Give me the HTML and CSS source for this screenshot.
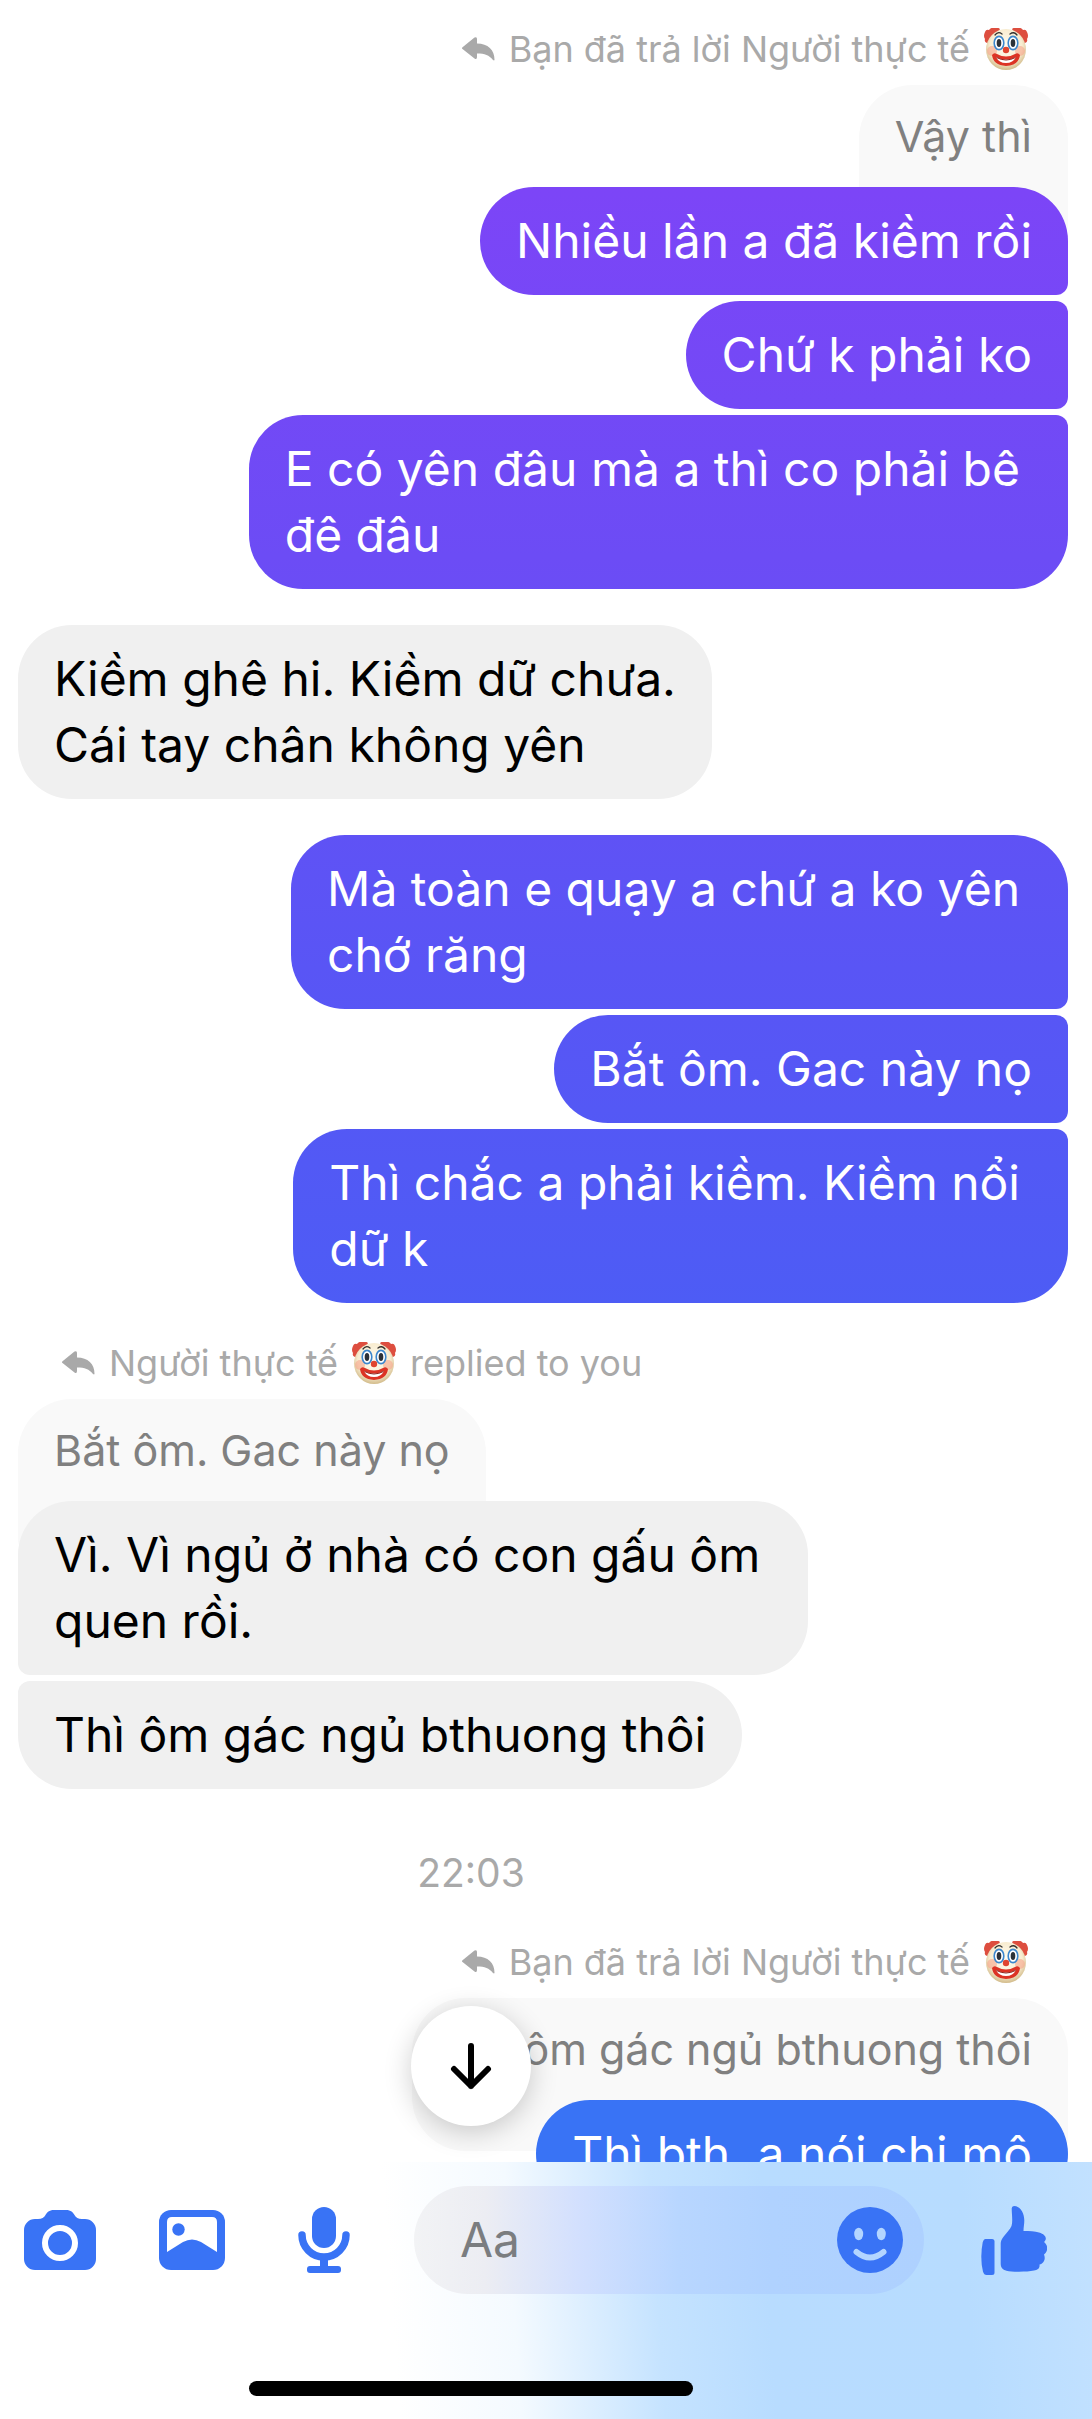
FILE: index.html
```html
<!DOCTYPE html>
<html lang="vi">
<head>
<meta charset="utf-8">
<meta name="viewport" content="width=device-width, initial-scale=1">
<title>Người thực tế</title>
<link rel="stylesheet" href="styles.css">
</head>
<body>
<svg class="sprite" aria-hidden="true">
  <defs>
    <radialGradient id="face" cx="50%" cy="42%" r="58%">
      <stop offset="0" stop-color="#fffdf2"/>
      <stop offset="0.7" stop-color="#f8ecd0"/>
      <stop offset="1" stop-color="#d2bb8a"/>
    </radialGradient>
    <symbol id="clown" viewBox="0 0 44 42">
      <path d="M1 4q1-3 4-2 2-3 6-2 3-1 5 1L7 17q-3 1-4-2-3-1-2-4-2-3 0-7zM43 4q-1-3-4-2-2-3-6-2-3-1-5 1l9 16q3 1 4-2 3-1 2-4 2-3 0-7z" fill="#dd4e3f"/>
      <ellipse cx="22" cy="21.500" rx="20" ry="20.500" fill="url(#face)"/>
      <circle cx="8" cy="23" r="5" fill="#f7a58c" opacity=".6"/>
      <circle cx="36" cy="23" r="5" fill="#f7a58c" opacity=".6"/>
      <path d="M11 7q3-4 7-1M26 6q4-3 7 1" fill="none" stroke="#33302e" stroke-width="1.300" stroke-linecap="round"/>
      <ellipse cx="15" cy="15" rx="4.800" ry="6.600" fill="#fff" stroke="#3b86cc" stroke-width="1.600"/>
      <ellipse cx="29" cy="15" rx="4.800" ry="6.600" fill="#fff" stroke="#3b86cc" stroke-width="1.600"/>
      <ellipse cx="15" cy="15" rx="2.300" ry="4" fill="#2b3138"/>
      <ellipse cx="29" cy="15" rx="2.300" ry="4" fill="#2b3138"/>
      <circle cx="22" cy="22" r="3.200" fill="#e0442f"/>
      <path d="M8 27q2-3 5-1 9 5 18 0 3-2 5 1-1 10-14 11Q9 37 8 27z" fill="#dc3325"/>
      <path d="M12 29q10 5 20 0-3 6-10 6t-10-6z" fill="#fff"/>
      <path d="M12.500 29.500q9.500 5 19 0" fill="none" stroke="#8d1f18" stroke-width="1"/>
    </symbol>
    <symbol id="reply" viewBox="0 0 33 24">
      <path d="M.5 10.300 12.500.6Q15-.8 15 2v4.500C26 6.500 32.500 13 32.500 22.500q0 1.500-1.500.5C27 18 23 16.500 15 16.500V20q0 3-2.500 1.400L.5 12q-1-.8 0-1.700z" fill="currentColor"/>
    </symbol>
  </defs>
</svg>

<main class="chat">
  <section class="group sent">
    <p class="label"><svg class="reply-icon"><use href="#reply"/></svg><span>Bạn đã trả lời Người thực tế</span><svg class="emoji" role="img" aria-label="clown"><use href="#clown"/></svg></p>
    <blockquote class="quote">Vậy thì</blockquote>
    <p class="bubble first">Nhiều lần a đã kiềm rồi</p>
    <p class="bubble">Chứ k phải ko</p>
    <p class="bubble last long">E có yên đâu mà a thì co phải bê<br>đê đâu</p>
  </section>

  <section class="group received">
    <p class="bubble first last">Kiềm ghê hi. Kiềm dữ chưa.<br>Cái tay chân không yên</p>
  </section>

  <section class="group sent">
    <p class="bubble first long">Mà toàn e quạy a chứ a ko yên<br>chớ răng</p>
    <p class="bubble">Bắt ôm. Gac này nọ</p>
    <p class="bubble last long">Thì chắc a phải kiềm. Kiềm nổi<br>dữ k</p>
  </section>

  <section class="group received">
    <p class="label"><svg class="reply-icon"><use href="#reply"/></svg><span>Người thực tế</span><svg class="emoji" role="img" aria-label="clown"><use href="#clown"/></svg><span>replied to you</span></p>
    <blockquote class="quote">Bắt ôm. Gac này nọ</blockquote>
    <p class="bubble first long">Vì. Vì ngủ ở nhà có con gấu ôm<br>quen rồi.</p>
    <p class="bubble last">Thì ôm gác ngủ bthuong thôi</p>
  </section>

  <time class="stamp">22:03</time>

  <section class="group sent">
    <p class="label"><svg class="reply-icon"><use href="#reply"/></svg><span>Bạn đã trả lời Người thực tế</span><svg class="emoji" role="img" aria-label="clown"><use href="#clown"/></svg></p>
    <blockquote class="quote">Thì ôm gác ngủ bthuong thôi</blockquote>
    <p class="bubble first last">Thì bth. a nói chi mô</p>
  </section>

  <button class="scroll-down" type="button" aria-label="Scroll to latest">
    <svg width="42" height="48" viewBox="0 0 42 48"><path d="M21 4v40M4 27l17 17 17-17" fill="none" stroke="#000" stroke-width="6" stroke-linecap="round" stroke-linejoin="round"/></svg>
  </button>
</main>

<footer class="composer">
  <form class="bar">
    <div class="tools">
      <button type="button" aria-label="Camera">
        <svg width="72" height="60" viewBox="0 0 72 60"><path d="M11 9h3c4 0 6-1.500 7.500-4S25 0 30 0h12c5 0 7 2.500 8.500 5s3.500 4 7.500 4h3a11 11 0 0 1 11 11v29a11 11 0 0 1-11 11H11A11 11 0 0 1 0 49V20A11 11 0 0 1 11 9z" fill="currentColor"/><circle cx="36" cy="33" r="15" fill="none" stroke="#fff" stroke-width="6"/></svg>
      </button>
      <button type="button" aria-label="Photos">
        <svg width="66" height="60" viewBox="0 0 66 60"><rect width="66" height="60" rx="12" fill="currentColor"/><path d="M8 12q0-5 5-5h40q5 0 5 5v30L42 32q-9-5-18 0L8 42z" fill="#fff"/><circle cx="19.500" cy="19.500" r="6.200" fill="currentColor"/></svg>
      </button>
      <button type="button" aria-label="Voice message">
        <svg width="52" height="66" viewBox="0 0 52 66"><rect x="14" width="24" height="41" rx="12" fill="currentColor"/><path d="M4 28a22 22 0 0 0 44 0" fill="none" stroke="currentColor" stroke-width="7.500" stroke-linecap="round"/><path d="M22 52h8v7h-8z" fill="currentColor"/><rect x="9" y="59" width="34" height="7" rx="3" fill="currentColor"/></svg>
      </button>
    </div>
    <div class="field">
      <input type="text" placeholder="Aa" aria-label="Message">
      <button type="button" aria-label="Emoji">
        <svg width="66" height="66" viewBox="0 0 66 66"><circle cx="33" cy="33" r="33" fill="currentColor"/><ellipse cx="21.700" cy="27" rx="4.500" ry="6.200" fill="#b3d5ff"/><ellipse cx="44.300" cy="27" rx="4.500" ry="6.200" fill="#b3d5ff"/><path d="M19.500 45q13.500 11 27 0" fill="none" stroke="#b3d5ff" stroke-width="6" stroke-linecap="round"/></svg>
      </button>
    </div>
    <button class="like" type="button" aria-label="Like">
      <svg width="66" height="70" viewBox="0 0 66 70"><path d="M4.500 34H11q2.500 0 2.500 2.500v31q0 2.500-2.500 2.500H5.500Q3 70 2 66.500.300 60 .3 52t1.400-14.500Q2.500 34 4.500 34z" fill="currentColor"/><path d="M30.700 3.500Q30.700 1 33 1c6 0 10.300 6.500 10.300 14.500 0 4-.8 6.500-.8 10.500 6 0 11.500.2 15.500 1.500 7 2 8.500 6.500 5 9.500 4.500 3.500 4 9.500 0 12.500 2 5-.5 9-4.500 10 .5 4-2 5.500-5.500 6-4 .8-9 1.200-15 1.200-5 0-9.500-.3-12.500-1-4-1-5.800-3-5.800-7.200V39c0-3 .8-4.500 3-7.500 3-4 6.500-7 7.800-10.500C32 16 30.700 9 30.700 3.500z" fill="currentColor"/></svg>
    </button>
  </form>
  <div class="home-indicator"></div>
</footer>
</body>
</html>
```

FILE: styles.css
```css
* {
  box-sizing: border-box;
}

body {
  --accent: #3973f5;
  --edge: 150px;
  margin: 0;
  height: 100vh;
  display: flex;
  flex-direction: column;
  background: #fff;
  color: #000;
  font-family: Inter, "Noto Sans", sans-serif;
}

p,
blockquote {
  margin: 0;
}

button {
  display: flex;
  padding: 0;
  border: 0;
  background: none;
  color: var(--accent);
}

.sprite {
  position: absolute;
  width: 0;
  height: 0;
}

/* Conversation */

.chat {
  position: relative;
  flex: 1;
  min-height: 0;
  overflow: hidden;
  display: flex;
  flex-direction: column;
  gap: 36px;
  padding: 25px 24px 0 18px;
}

.group {
  flex: none;
  display: flex;
  flex-direction: column;
  gap: 6px;
  align-items: flex-start;
}

.sent {
  align-items: flex-end;
}

.label {
  display: flex;
  align-items: center;
  gap: 14px;
  height: 54px;
  padding: 2px 40px 8px 44px;
  color: #a9a9a9;
  font-size: 36px;
  line-height: 44px;
  white-space: nowrap;
}

.reply-icon {
  width: 33px;
  height: 24px;
}

.emoji {
  width: 44px;
  height: 42px;
}

.quote {
  margin-bottom: -57px;
  padding: 21px 36px 72px;
  border-radius: 54px;
  background: #f9f9f9;
  color: #808080;
  font-size: 43px;
  line-height: 60px;
}

.sent .quote {
  border-bottom-right-radius: 12px;
}

.received .quote {
  border-bottom-left-radius: 12px;
}

.bubble {
  position: relative;
  padding: 21px 36px;
  background: #f0f0f0;
  font-size: 48px;
  line-height: 66px;
  white-space: nowrap;
}

.long {
  padding-right: 48px;
}

.sent .bubble {
  border-radius: 54px 12px 12px 54px;
  background: linear-gradient(#8442f8 0%, #7c45f7 8%, #6c4cf5 23%, #5955f5 40%, #4d5cf5 54%, #3973f5 87%) fixed;
  color: #fff;
}

.received .bubble {
  border-radius: 12px 54px 54px 12px;
}

.sent .first {
  border-top-right-radius: 54px;
}

.sent .last {
  border-bottom-right-radius: 54px;
}

.received .first {
  border-top-left-radius: 54px;
}

.received .last {
  border-bottom-left-radius: 54px;
}

.stamp {
  flex: none;
  padding: 18px 144px 0 0;
  color: #a9a9a9;
  font-size: 39px;
  line-height: 59px;
  text-align: center;
}

.scroll-down {
  position: absolute;
  bottom: 36px;
  left: calc((100% - var(--edge) - 120px) / 2);
  width: 120px;
  height: 120px;
  align-items: center;
  justify-content: center;
  border-radius: 50%;
  background: #fff;
  box-shadow: 0 6px 28px rgba(0, 0, 0, 0.2);
}

/* Composer */

.composer {
  flex: none;
  display: flex;
  flex-direction: column;
  gap: 87px;
  padding: 24px 45px 23px 24px;
  background: linear-gradient(86deg, #fff 36%, #f4faff 47%, #c5e3ff 60%, #b8dcff 70%, #b7dcff 88%, #c2e1ff 100%);
}

.bar {
  display: flex;
  align-items: center;
}

.tools {
  display: flex;
  align-items: center;
  gap: 63px;
  flex: none;
  width: 390px;
}

.tools button:last-child {
  margin-left: 10px;
}

.field {
  flex: 1;
  min-width: 0;
  display: flex;
  align-items: center;
  height: 108px;
  padding: 0 21px 0 46px;
  border-radius: 54px;
  background: linear-gradient(90deg, #f2f3f5 0%, #ecedf3 14%, #d3e0fe 32%, #b8d6ff 52%, #b0d2ff 70%, #aed1ff 100%);
}

.field input {
  flex: 1;
  min-width: 0;
  padding: 0;
  border: 0;
  outline: 0;
  background: none;
  color: #000;
  font: 48px/66px Inter, "Noto Sans", sans-serif;
}

.field input::placeholder {
  color: #7b7d80;
  opacity: 1;
}

.like {
  margin-left: 57px;
}

.home-indicator {
  width: 444px;
  height: 15px;
  margin-left: calc((100% + 69px - var(--edge) - 444px) / 2 - 24px);
  border-radius: 8px;
  background: #000;
}
```
